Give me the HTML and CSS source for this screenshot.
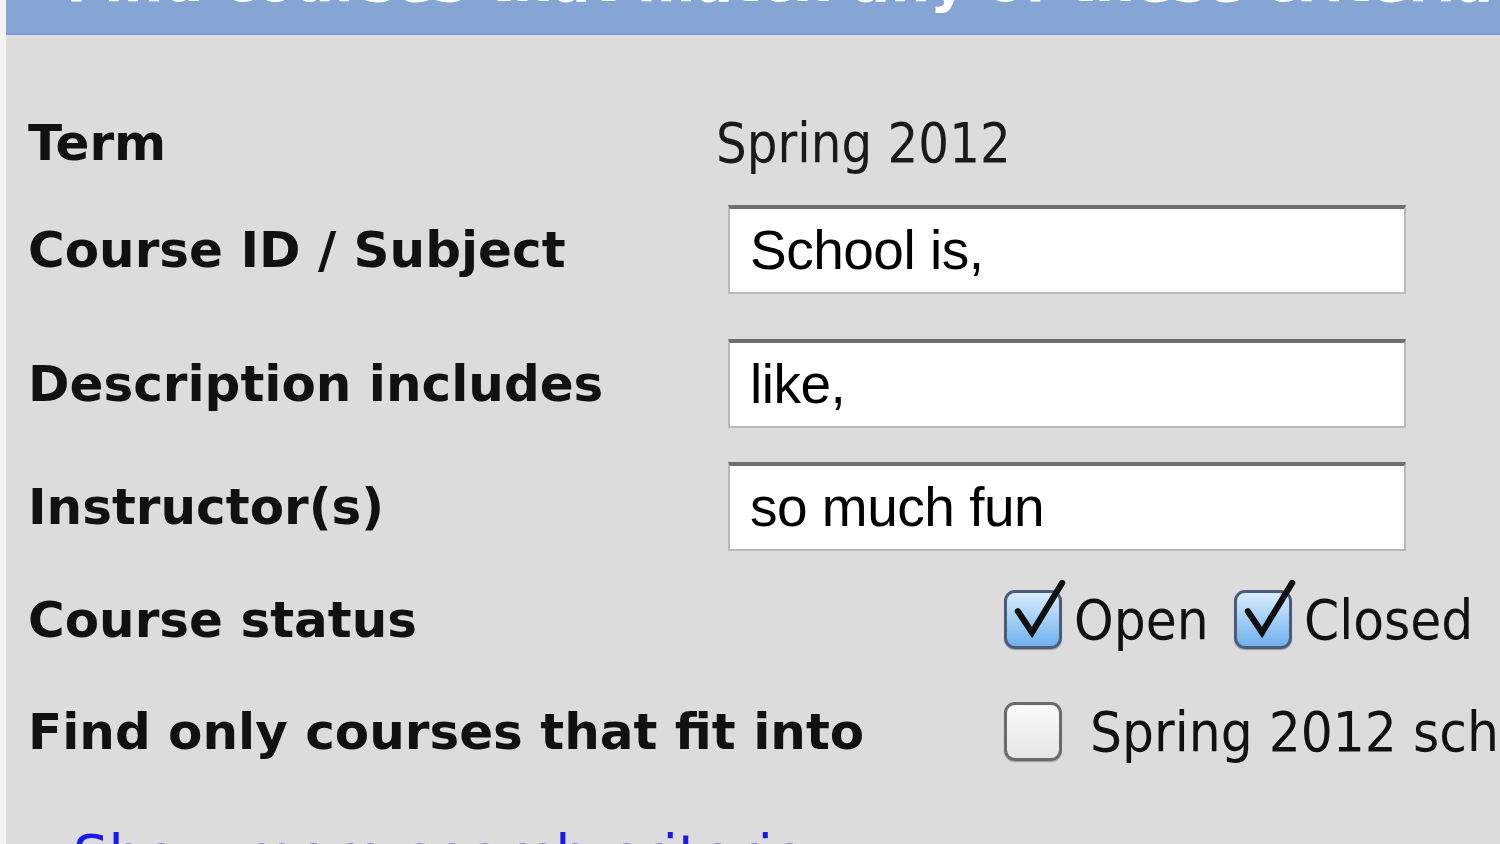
FILE: index.html
```html
<!DOCTYPE html>
<html>
<head>
<meta charset="utf-8">
<link rel="stylesheet" href="styles.css">
</head>
<body>
<div class="page">
  <div class="titlebar"><span class="title">Find courses that match any of these criteria</span></div>
  <div class="form">
    <div class="row row-term">
      <div class="label">Term</div>
      <div class="value term-value">Spring 2012</div>
    </div>
    <div class="row row-course">
      <div class="label">Course ID / Subject</div>
      <div class="field">School is,</div>
    </div>
    <div class="row row-desc">
      <div class="label">Description includes</div>
      <div class="field">like,</div>
    </div>
    <div class="row row-instr">
      <div class="label">Instructor(s)</div>
      <div class="field">so much fun</div>
    </div>
    <div class="row row-status">
      <div class="label">Course status</div>
      <div class="checks">
        <span class="cb checked"><svg viewBox="0 0 70 80" class="tick"><path d="M10 38 L26 62 L60 6" /></svg></span><span class="cb-label">Open</span>
        <span class="cb checked"><svg viewBox="0 0 70 80" class="tick"><path d="M10 38 L26 62 L60 6" /></svg></span><span class="cb-label">Closed</span>
        <span class="cb"></span><span class="cb-label">Wait list</span>
      </div>
    </div>
    <div class="row row-fit">
      <div class="label">Find only courses that fit into</div>
      <div class="checks">
        <span class="cb"></span><span class="cb-label fit-label">Spring 2012 schedule</span>
      </div>
    </div>
    <div class="more"><a href="#" class="more-link">Show more search criteria</a></div>
  </div>
</div>
</body>
</html>
```
FILE: styles.css
```css
html, body {
  margin: 0;
  padding: 0;
  width: 1500px;
  height: 844px;
  overflow: hidden;
  background: #f3f3f3;
}
.page {
  margin-left: 6px;
  height: 844px;
  background: #dcdcdc;
  overflow: hidden;
}
.titlebar {
  height: 33px;
  background: #85a5d5;
  border-bottom: 2px solid #7b9bd0;
  overflow: hidden;
  position: relative;
}
.title {
  display: block;
  margin-top: -46px;
  margin-left: 60px;
  white-space: nowrap;
  font-family: "DejaVu Sans", Verdana, sans-serif;
  font-weight: bold;
  font-size: 56px;
  line-height: 56px;
  color: #ffffff;
}
.form {
  padding-left: 22px;
  display: flex;
  flex-direction: column;
}
.row {
  display: flex;
  align-items: center;
  height: 89px;
}
.row-term { margin-top: 63px; }
.row-course { margin-top: 18px; }
.row-desc { margin-top: 45px; }
.row-instr { margin-top: 34px; }
.row-status { margin-top: 24px; }
.row-fit { margin-top: 23px; }
.label {
  width: 700px;
  flex: none;
  font-family: "DejaVu Sans", Verdana, sans-serif;
  font-weight: bold;
  font-size: 50px;
  color: #111;
  white-space: nowrap;
}
.value {
  font-family: "DejaVu Sans", Tahoma, sans-serif;
  font-size: 55px;
  color: #1a1a1a;
  white-space: nowrap;
}
.term-value {
  margin-left: -12px;
  transform: scaleX(0.88);
  transform-origin: left center;
}
.field {
  box-sizing: border-box;
  width: 678px;
  height: 89px;
  background: #fff;
  border: 2px solid #b9b9b9;
  border-top: 4px solid #6e6e6e;
  padding-left: 20px;
  font-family: "Liberation Sans", Arial, sans-serif;
  font-size: 55px;
  line-height: 83px;
  color: #000;
  letter-spacing: -0.5px;
  white-space: nowrap;
}
.checks {
  margin-left: 276px;
  display: flex;
  align-items: center;
  white-space: nowrap;
}
.cb {
  flex: none;
  position: relative;
  box-sizing: border-box;
  width: 58px;
  height: 59px;
  border: 3px solid #6a6a6a;
  border-radius: 11px;
  background: linear-gradient(#fafafa, #e6e6e6);
  box-shadow: 0 1px 1px rgba(0,0,0,0.3);
}
.cb.checked {
  border-color: #4d5b7a;
  background: linear-gradient(#d8ecfd 0%, #a9d2f6 45%, #6fb1ee 100%);
}
.tick {
  position: absolute;
  left: 2px;
  top: -16px;
  width: 62px;
  height: 72px;
  overflow: visible;
}
.tick path {
  fill: none;
  stroke: #111;
  stroke-width: 7;
  stroke-linecap: round;
  stroke-linejoin: miter;
}
.cb-label {
  font-family: "DejaVu Sans", Tahoma, sans-serif;
  font-size: 56px;
  color: #111;
  margin-left: 12px;
  margin-right: 10px;
  transform: scaleX(0.9);
  transform-origin: left center;
  display: inline-block;
}
.fit-label {
  margin-left: 28px;
}
.more {
  margin-top: 46px;
  padding-left: 45px;
}
.more-link {
  font-family: "DejaVu Sans", Tahoma, sans-serif;
  font-size: 56px;
  color: #1a1ae6;
  text-decoration: none;
  white-space: nowrap;
}
```
